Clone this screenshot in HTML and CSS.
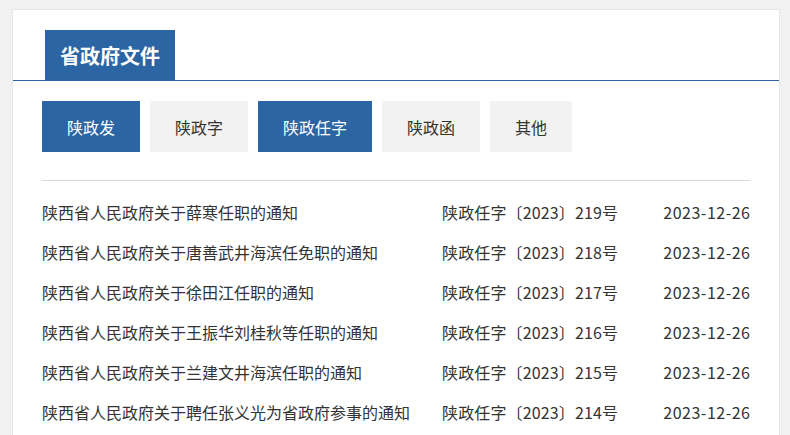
FILE: index.html
```html
<!DOCTYPE html>
<html lang="zh-CN">
<head>
  <meta charset="UTF-8" />
  <meta name="viewport" content="width=device-width, initial-scale=1.0"/>
  <title>省政府文件</title>
  <link rel="stylesheet" href="styles.css">
</head>
<body>

  <div class="panel">
    <div class="panel-head">
      <span class="panel-title">省政府文件</span>
    </div>

    <div class="panel-body">
      <div class="tabs">
        <button class="tab active">陕政发</button>
        <button class="tab">陕政字</button>
        <button class="tab active">陕政任字</button>
        <button class="tab">陕政函</button>
        <button class="tab">其他</button>
      </div>

      <ul class="doc-list">
        <li class="doc-row">
          <a class="doc-title" href="#">陕西省人民政府关于薛寒任职的通知</a>
          <span class="doc-no">陕政任字〔2023〕219号</span>
          <span class="doc-date">2023-12-26</span>
        </li>
        <li class="doc-row">
          <a class="doc-title" href="#">陕西省人民政府关于唐善武井海滨任免职的通知</a>
          <span class="doc-no">陕政任字〔2023〕218号</span>
          <span class="doc-date">2023-12-26</span>
        </li>
        <li class="doc-row">
          <a class="doc-title" href="#">陕西省人民政府关于徐田江任职的通知</a>
          <span class="doc-no">陕政任字〔2023〕217号</span>
          <span class="doc-date">2023-12-26</span>
        </li>
        <li class="doc-row">
          <a class="doc-title" href="#">陕西省人民政府关于王振华刘桂秋等任职的通知</a>
          <span class="doc-no">陕政任字〔2023〕216号</span>
          <span class="doc-date">2023-12-26</span>
        </li>
        <li class="doc-row">
          <a class="doc-title" href="#">陕西省人民政府关于兰建文井海滨任职的通知</a>
          <span class="doc-no">陕政任字〔2023〕215号</span>
          <span class="doc-date">2023-12-26</span>
        </li>
        <li class="doc-row">
          <a class="doc-title" href="#">陕西省人民政府关于聘任张义光为省政府参事的通知</a>
          <span class="doc-no">陕政任字〔2023〕214号</span>
          <span class="doc-date">2023-12-26</span>
        </li>
      </ul>
    </div>
  </div>

</body>
</html>
```

FILE: styles.css
```css
body {
  margin: 0;
  padding: 9px 10px 0 12px;
  background: #f1f1f1;
  font-family: "Noto Sans CJK SC", "Microsoft YaHei", sans-serif;
  color: #333;
}

.panel {
  background: #fff;
  border: 1px solid #e4e4e4;
  border-bottom: none;
  height: 440px;
}

.panel-head {
  display: flex;
  padding: 20px 0 0 32px;
  border-bottom: 1px solid #2c65a3;
}

.panel-title {
  display: flex;
  align-items: center;
  height: 50px;
  padding: 0 15px;
  background: #2c65a3;
  color: #fff;
  font-size: 20px;
  font-weight: bold;
}

.panel-body {
  padding: 20px 29px 0;
}

.tabs {
  display: flex;
  gap: 10px;
  padding-bottom: 28px;
  border-bottom: 1px solid #d9d9d9;
}

.tab {
  height: 51px;
  padding: 0 25px;
  border: none;
  background: #f2f2f2;
  color: #333;
  font-family: inherit;
  font-size: 16px;
  cursor: pointer;
}

.tab.active {
  background: #2c65a3;
  color: #fff;
}

.doc-list {
  list-style: none;
  margin: 0;
  padding: 11px 0 0;
}

.doc-row {
  display: grid;
  grid-template-columns: 1fr 219px 89px;
  height: 40px;
  line-height: 40px;
  font-size: 16px;
}

.doc-title {
  color: #333;
  text-decoration: none;
  white-space: nowrap;
}

.doc-no {
  white-space: nowrap;
  letter-spacing: 0.15px;
}

.doc-date {
  text-align: right;
  white-space: nowrap;
  letter-spacing: 0.5px;
  margin-right: -0.5px;
}
```
